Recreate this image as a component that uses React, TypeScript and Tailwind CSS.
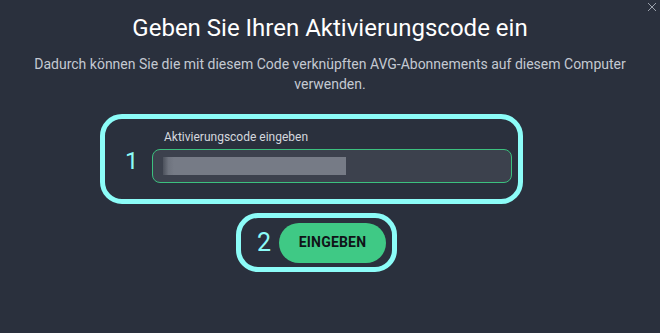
export default function App() {
  return (
    <div
      className="relative w-[660px] h-[333px] overflow-hidden bg-[#2a303d] text-white"
      style={{ fontFamily: 'Roboto, "Liberation Sans", sans-serif' }}
    >
      <button className="absolute right-[2px] top-[1px] p-[1px]" aria-label="Schließen">
        <svg width="10" height="10" viewBox="0 0 10 10" className="text-[#9aa0ab]">
          <path d="M1 1 L9 9 M9 1 L1 9" stroke="currentColor" strokeWidth="1" />
        </svg>
      </button>

      <div className="flex flex-col">
        <h1 className="mt-[12px] text-center text-[24px] leading-[32px] font-normal text-white">
          Geben Sie Ihren Aktivierungscode ein
        </h1>
        <p className="mt-[10px] px-[30px] text-center text-[14px] leading-[20px] text-[#c4c9d2]">
          Dadurch können Sie die mit diesem Code verknüpften AVG-Abonnements auf diesem Computer verwenden.
        </p>

        <div className="mt-[20px] ml-[100px] w-[423px] h-[90px] rounded-[22px] border-[5px] border-[#8cfcf8] flex items-end pb-[16px]">
          <span className="w-[47px] pl-[20px] mb-[5px] text-[24px] leading-[34px] text-[#8cfcf8]">1</span>
          <div className="flex flex-col">
            <label className="ml-[12px] mb-[5px] text-[12px] leading-[14px] text-[#d4d8df]">
              Aktivierungscode eingeben
            </label>
            <div className="w-[360px] h-[34px] rounded-[8px] border border-[#3cc07f] bg-[#3c414d] flex items-center pl-[10px]">
              <div className="w-[183px] h-[18px] bg-[linear-gradient(to_right,#4c515c_0%,#6e737e_3%,#767b86_6%,#767b86_100%)]" />
            </div>
          </div>
        </div>

        <div className="mt-[9px] ml-[236px] w-[161px] h-[59px] rounded-[22px] border-[5px] border-[#8cfcf8] flex items-center">
          <span className="w-[38px] pl-[16px] text-[25px] leading-[30px] text-[#8cfcf8]">2</span>
          <button className="w-[107px] h-[40px] rounded-full bg-[#3fc985] text-[14px] font-bold tracking-[0.2px] text-[#101418]">
            EINGEBEN
          </button>
        </div>
      </div>
    </div>
  );
}
